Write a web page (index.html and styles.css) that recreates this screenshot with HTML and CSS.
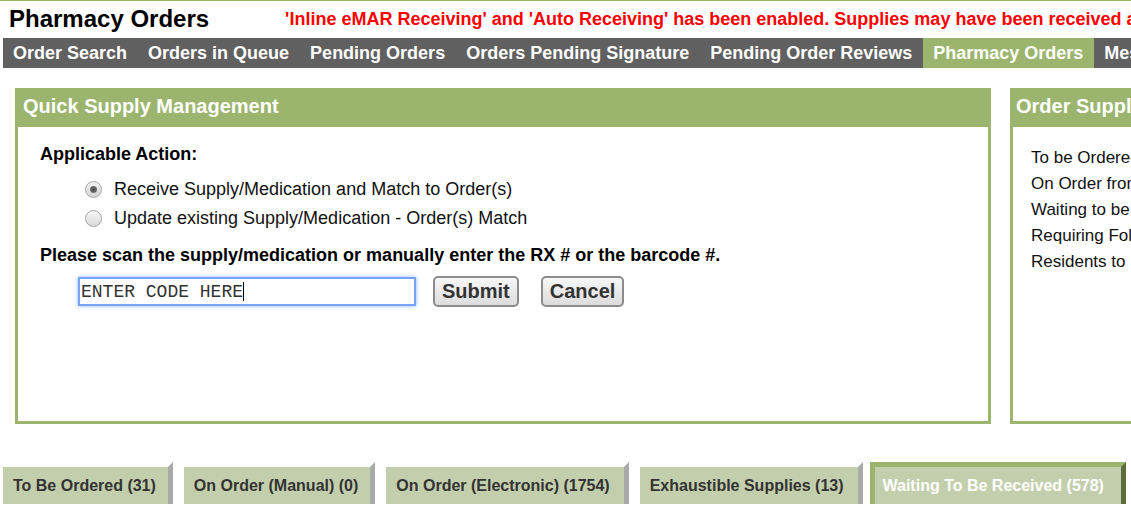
FILE: index.html
```html
<!DOCTYPE html>
<html lang="en">
<head>
<meta charset="utf-8">
<title>Pharmacy Orders</title>
<link rel="stylesheet" href="styles.css">
</head>
<body>
<div class="page">
  <header class="titlebar">
    <h1 class="title">Pharmacy Orders</h1>
    <p class="notice">'Inline eMAR Receiving' and 'Auto Receiving' has been enabled. Supplies may have been received automatically.</p>
  </header>
  <nav class="menu">
    <a class="menu-item">Order Search</a>
    <a class="menu-item">Orders in Queue</a>
    <a class="menu-item">Pending Orders</a>
    <a class="menu-item">Orders Pending Signature</a>
    <a class="menu-item">Pending Order Reviews</a>
    <a class="menu-item active">Pharmacy Orders</a>
    <a class="menu-item">Messages</a>
  </nav>
  <main class="panels">
    <section class="panel panel-main">
      <h2 class="panel-head">Quick Supply Management</h2>
      <div class="panel-body">
        <div class="label">Applicable Action:</div>
        <div class="options">
          <label class="option"><input type="radio" name="act" class="radio" checked><span>Receive Supply/Medication and Match to Order(s)</span></label>
          <label class="option"><input type="radio" name="act" class="radio"><span>Update existing Supply/Medication - Order(s) Match</span></label>
        </div>
        <div class="label scan">Please scan the supply/medication or manually enter the RX # or the barcode #.</div>
        <div class="form-row">
          <div class="code-box"><span class="code-text">ENTER CODE HERE</span><span class="caret"></span></div>
          <button class="btn">Submit</button>
          <button class="btn">Cancel</button>
        </div>
      </div>
    </section>
    <section class="panel panel-side">
      <h2 class="panel-head">Order Supplies</h2>
      <div class="panel-body side-body">
        <div class="side-line">To be Ordered</div>
        <div class="side-line">On Order from Pharmacy</div>
        <div class="side-line">Waiting to be Received</div>
        <div class="side-line">Requiring Follow-up</div>
        <div class="side-line">Residents to Review</div>
      </div>
    </section>
  </main>
  <div class="tabs">
    <a class="tab">To Be Ordered (31)</a>
    <a class="tab">On Order (Manual) (0)</a>
    <a class="tab">On Order (Electronic) (1754)</a>
    <a class="tab">Exhaustible Supplies (13)</a>
    <a class="tab active">Waiting To Be Received (578)</a>
  </div>
</div>
</body>
</html>
```

FILE: styles.css
```css
html, body {
  margin: 0;
  padding: 0;
  background: #fff;
}
body {
  font-family: "Liberation Sans", Arial, sans-serif;
  color: #000;
  overflow: hidden;
  width: 1131px;
  height: 514px;
}
.page {
  border-top: 1px solid #9bb56e;
  width: 1131px;
  overflow: hidden;
}
.titlebar {
  display: flex;
  align-items: center;
  height: 37px;
  padding-left: 9px;
  white-space: nowrap;
}
.title {
  margin: 0 0 1px;
  font-size: 24px;
  font-weight: bold;
  color: #000;
  flex-shrink: 0;
}
.notice {
  margin: 0 0 1px 76px;
  font-size: 18px;
  font-weight: bold;
  color: #ff0000;
  flex-shrink: 0;
}
.menu {
  display: flex;
  margin-left: 3px;
  height: 30px;
  background: #606060;
  white-space: nowrap;
}
.menu-item {
  display: block;
  flex-shrink: 0;
  padding: 0 11px 0 10px;
  line-height: 30px;
  font-size: 18px;
  font-weight: bold;
  color: #fff;
}
.menu-item.active {
  background: #9bb56e;
}
.panels {
  display: flex;
  gap: 19px;
  margin-top: 20px;
  padding-left: 15px;
}
.panel {
  flex-shrink: 0;
  height: 336px;
  box-sizing: border-box;
  border: 3px solid #9bb56e;
  border-top: 0;
  display: flex;
  flex-direction: column;
}
.panel-main {
  width: 976px;
}
.panel-side {
  width: 320px;
}
.panel-head {
  margin: 0 -3px;
  height: 39px;
  line-height: 36px;
  padding-left: 8px;
  background: #9bb56e;
  color: #fff;
  font-size: 20px;
  font-weight: bold;
  white-space: nowrap;
}
.panel-side .panel-head {
  padding-left: 6px;
}
.panel-body {
  flex: 1;
  padding: 17px 22px 0;
}
.label {
  font-size: 18px;
  font-weight: bold;
  line-height: 21px;
}
.options {
  margin-top: 10px;
  padding-left: 45px;
}
.option {
  display: flex;
  align-items: center;
  height: 29px;
  font-size: 18px;
  color: #111;
}
.radio {
  appearance: none;
  -webkit-appearance: none;
  margin: 0 12px 0 0;
  width: 17px;
  height: 17px;
  border-radius: 50%;
  border: 1px solid #a5a5a5;
  box-sizing: border-box;
  background: linear-gradient(#f7f7f7, #d9d9d9);
}
.radio:checked {
  background: radial-gradient(circle, #4e4e4e 0, #6a6a6a 3px, transparent 4px), linear-gradient(#f2f2f2, #d4d4d4);
}
.scan {
  margin-top: 12px;
}
.form-row {
  display: flex;
  align-items: center;
  margin-top: 10px;
  padding-left: 38px;
}
.code-box {
  display: flex;
  align-items: center;
  width: 338px;
  height: 29px;
  box-sizing: border-box;
  border: 2px solid #76a3f5;
  box-shadow: 0 0 4px #8fb4f8;
  padding-left: 1px;
  font-family: "Liberation Mono", "Courier New", monospace;
  font-size: 18px;
  color: #333;
  white-space: nowrap;
}
.caret {
  width: 1px;
  height: 19px;
  background: #000;
}
.btn {
  margin-left: 17px;
  height: 31px;
  padding: 0 7px;
  border: 2px solid #8c8c8c;
  border-radius: 5px;
  background: linear-gradient(#f7f7f7, #dcdcdc);
  font-family: "Liberation Sans", Arial, sans-serif;
  font-size: 20px;
  font-weight: bold;
  color: #333;
}
.btn + .btn {
  margin-left: 22px;
}
.side-body {
  padding: 18px 18px 0;
}
.side-line {
  font-size: 17px;
  line-height: 26px;
  color: #111;
  white-space: nowrap;
}
.tabs {
  display: flex;
  margin-top: 38px;
  padding-left: 3px;
  white-space: nowrap;
}
.tab {
  display: block;
  flex-shrink: 0;
  height: 37px;
  line-height: 37px;
  padding: 0 12px 0 10px;
  margin-right: 11px;
  border-top: 5px solid transparent;
  border-right: 5px solid #a9a9a9;
  background: #c3cfac;
  background-clip: padding-box;
  font-size: 16px;
  font-weight: bold;
  color: #333;
}
.tab:nth-child(3), .tab:nth-child(4) {
  padding-right: 14px;
}
.tab.active {
  margin-left: -4px;
  padding: 0 17px 0 8px;
  border-top-color: #9bb56e;
  border-left: 5px solid #9bb56e;
  border-right-color: #5b6d3c;
  color: #fff;
}
```
